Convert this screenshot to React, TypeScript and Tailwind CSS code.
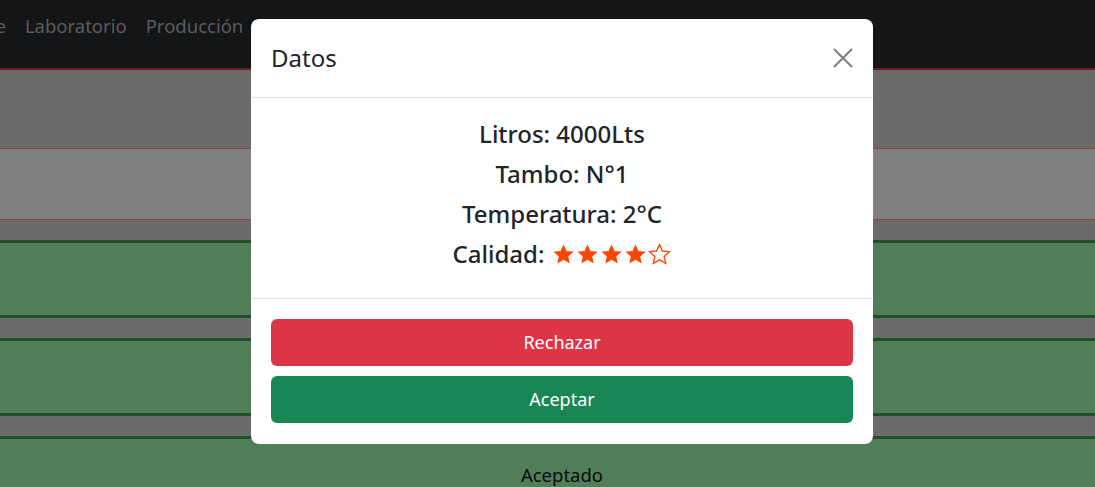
import React from 'react';

const font = { fontFamily: '"Segoe UI", "Noto Sans", "Open Sans", sans-serif' };

const Star = ({ filled }: { filled: boolean }) => (
  <svg width="23" height="22" viewBox="0 0 24 23" className="shrink-0">
    <path
      d="M12 1.5l3.09 6.86 7.41.72-5.6 4.98 1.63 7.34L12 17.6l-6.53 3.8 1.63-7.34-5.6-4.98 7.41-.72z"
      fill={filled ? '#ff4500' : 'none'}
      stroke="#ff4500"
      strokeWidth={filled ? 0 : 1.4}
      strokeLinejoin="miter"
    />
  </svg>
);

const GreenRow = ({ label }: { label: string }) => (
  <div className="h-[78px] bg-[#517d59] border-y-[3px] border-[#1f5128] flex items-center justify-center pl-[29px] text-[18.5px] text-[#0b0b0b]">
    {label}
  </div>
);

const App: React.FC = () => {
  return (
    <div className="relative w-[1095px] h-[487px] overflow-hidden bg-[#6b6b6b]" style={font}>
      {/* page behind the backdrop */}
      <nav className="h-[70px] bg-[#141517] border-b-2 border-[#6d1b20] flex items-start pt-[13px] gap-[19px] text-[18.5px] leading-[25px] text-[#5b5c5e]">
        <span className="-ml-[45px]">Leche</span>
        <span>Laboratorio</span>
        <span>Producción</span>
        <span>Recepción</span>
        <span>Informes</span>
        <span className="text-[#7a1414]">Salir</span>
      </nav>
      <div className="h-[78px]" />
      <div className="h-[72px] bg-[#808080] border-y border-[#8a4646]" />
      <div className="h-[20px]" />
      <GreenRow label="Pendiente" />
      <div className="h-[20px]" />
      <GreenRow label="Pendiente" />
      <div className="h-[20px]" />
      <GreenRow label="Aceptado" />

      {/* modal */}
      <div className="absolute inset-0 flex justify-center items-start pt-[19px] pl-[29px]">
        <div className="w-[622px] bg-white rounded-lg overflow-hidden text-[#212529]">
          <div className="h-[79px] px-5 flex items-center justify-between border-b border-[#dee2e6]">
            <h5 className="text-[24px] leading-none">Datos</h5>
            <button type="button" className="w-5 h-5 flex items-center justify-center">
              <svg width="20" height="20" viewBox="0 0 20 20">
                <path d="M1 1L19 19M19 1L1 19" stroke="#7d7d7d" strokeWidth="2" />
              </svg>
            </button>
          </div>
          <div className="pt-4 pb-6 flex flex-col items-center text-[24px] font-medium">
            <div className="h-10 flex items-center">Litros: 4000Lts</div>
            <div className="h-10 flex items-center">Tambo: N°1</div>
            <div className="h-10 flex items-center">Temperatura: 2°C</div>
            <div className="h-10 flex items-center gap-2">
              <span>Calidad:</span>
              <span className="flex items-center gap-[1px]">
                <Star filled />
                <Star filled />
                <Star filled />
                <Star filled />
                <Star filled={false} />
              </span>
            </div>
          </div>
          <div className="border-t border-[#dee2e6] px-5 pt-5 pb-[21px] flex flex-col gap-[10px]">
            <button type="button" className="h-[47px] rounded-md bg-[#dc3545] text-white text-[18px]">
              Rechazar
            </button>
            <button type="button" className="h-[47px] rounded-md bg-[#198754] text-white text-[18px]">
              Aceptar
            </button>
          </div>
        </div>
      </div>
    </div>
  );
};

export default App;
